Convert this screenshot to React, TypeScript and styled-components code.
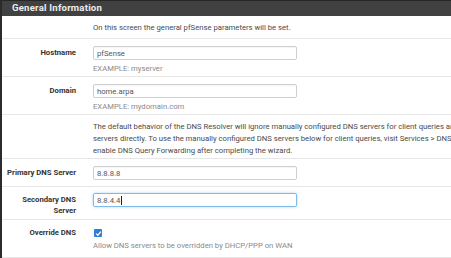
import React from 'react'
import styled, { createGlobalStyle } from 'styled-components'

const GlobalStyle = createGlobalStyle`
    html, body {
        margin: 0;
        padding: 0;
        background: #fff;
        overflow: hidden;
    }
    body {
        font-family: Roboto, 'Liberation Sans', sans-serif;
    }
`

const Panel = styled.section`
    width: 620px;
    border-left: 2px solid #2b2b2b;
    background: #fff;
`

const PanelHeading = styled.h2`
    margin: 0;
    height: 16px;
    box-sizing: border-box;
    padding-left: 10px;
    background: #414141;
    border-top: 1px solid #262626;
    color: #ececec;
    font-size: 9.6px;
    font-weight: 700;
    line-height: 14px;
    letter-spacing: 0.2px;
`

const Row = styled.div<{ $pt?: number; $pb?: number }>`
    display: grid;
    grid-template-columns: 91px 1fr;
    padding: ${(p) => p.$pt ?? 7}px 0 ${(p) => p.$pb ?? 6}px;
    border-bottom: 1px solid #e6e6e6;
    font-size: 7.7px;
    color: #4a4a4a;
`

const Label = styled.label<{ $multi?: boolean }>`
    box-sizing: border-box;
    padding: ${(p) => (p.$multi ? '1px 17px 0 2px' : '0 17px 0 2px')};
    text-align: right;
    font-weight: 700;
    color: #333;
    line-height: ${(p) => (p.$multi ? '11px' : '14px')};
`

const Field = styled.div`
    display: flex;
    flex-direction: column;
    align-items: flex-start;
`

const Input = styled.div<{ $focus?: boolean }>`
    box-sizing: border-box;
    width: 204px;
    height: 14px;
    padding-left: 3px;
    display: flex;
    align-items: center;
    border: 1px solid ${(p) => (p.$focus ? '#7fbbea' : '#cfcfcf')};
    border-radius: 2px;
    box-shadow: ${(p) =>
        p.$focus ? '0 0 3px rgba(102, 175, 233, 0.55)' : 'inset 0 1px 1px rgba(0,0,0,0.04)'};
    color: #555;
    font-size: 7.7px;
`

const Caret = styled.span`
    display: inline-block;
    width: 1px;
    height: 9px;
    margin-left: 1px;
    background: #222;
`

const Help = styled.p`
    margin: 3px 0 0;
    line-height: 11px;
    color: #8a8a8a;
    white-space: nowrap;
`

const Text = styled.p`
    margin: 0;
    line-height: 12px;
    color: #4a4a4a;
    white-space: nowrap;
`

const Check = styled.span`
    display: flex;
    align-items: center;
    justify-content: center;
    width: 8px;
    height: 8px;
    margin-top: 3px;
    margin-left: 1px;
    border-radius: 1px;
    background: #2f7fd6;
`

export default function App() {
    return (
        <>
            <GlobalStyle />
            <Panel>
                <PanelHeading>General Information</PanelHeading>
                <Row $pt={6} $pb={4}>
                    <span />
                    <Text>On this screen the general pfSense parameters will be set.</Text>
                </Row>
                <Row $pb={2}>
                    <Label>Hostname</Label>
                    <Field>
                        <Input>pfSense</Input>
                        <Help>EXAMPLE: myserver</Help>
                    </Field>
                </Row>
                <Row $pb={2}>
                    <Label>Domain</Label>
                    <Field>
                        <Input>home.arpa</Input>
                        <Help>EXAMPLE: mydomain.com</Help>
                    </Field>
                </Row>
                <Row $pt={6} $pb={1}>
                    <span />
                    <Text>
                        The default behavior of the DNS Resolver will ignore manually configured DNS
                        servers for client queries and query root DNS
                        <br />
                        servers directly. To use the manually configured DNS servers below for client
                        queries, visit Services &gt; DNS Resolver and
                        <br />
                        enable DNS Query Forwarding after completing the wizard.
                    </Text>
                </Row>
                <Row>
                    <Label>Primary DNS Server</Label>
                    <Field>
                        <Input>8.8.8.8</Input>
                    </Field>
                </Row>
                <Row $pt={6} $pb={3}>
                    <Label $multi>Secondary DNS Server</Label>
                    <Field>
                        <Input $focus>
                            8.8.4.4
                            <Caret />
                        </Input>
                    </Field>
                </Row>
                <Row $pt={6} $pb={6}>
                    <Label>Override DNS</Label>
                    <Field>
                        <Check>
                            <svg width="7" height="7" viewBox="0 0 8 8">
                                <path
                                    d="M1.3 4.2 L3.2 6 L6.8 1.8"
                                    fill="none"
                                    stroke="#fff"
                                    strokeWidth="1.4"
                                />
                            </svg>
                        </Check>
                        <Help>Allow DNS servers to be overridden by DHCP/PPP on WAN</Help>
                    </Field>
                </Row>
            </Panel>
        </>
    )
}
